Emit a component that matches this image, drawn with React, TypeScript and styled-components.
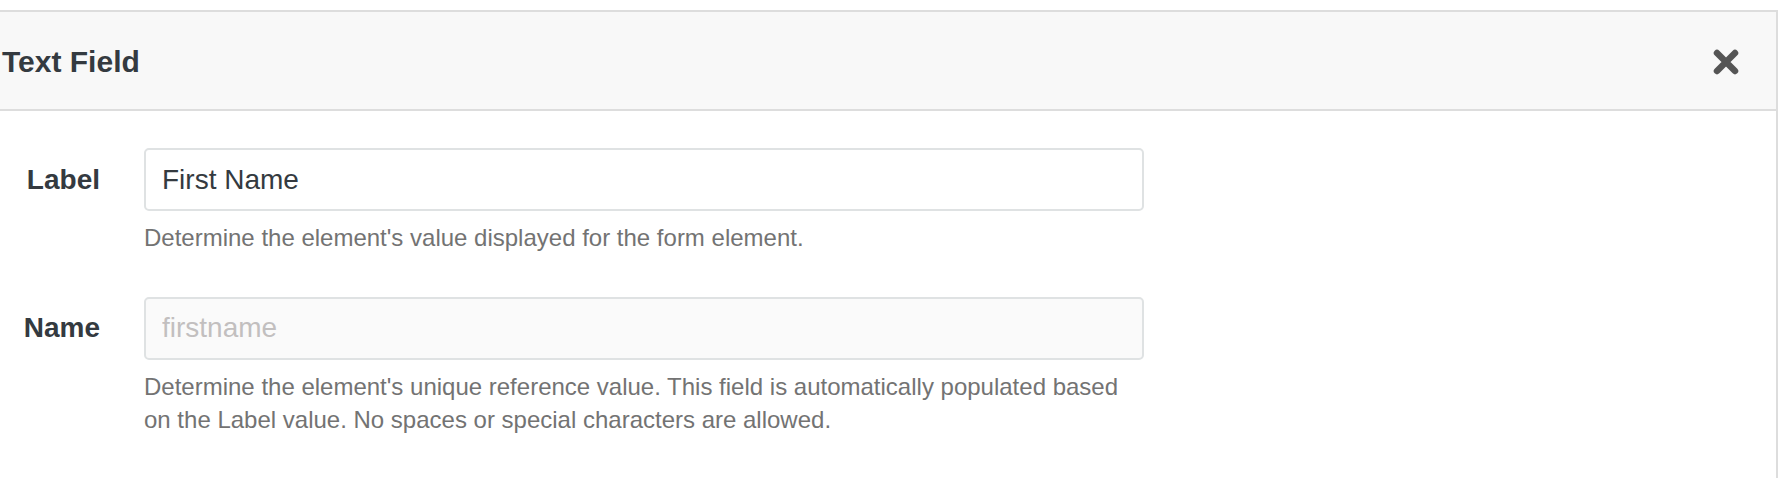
import React from "react";
import styled, { createGlobalStyle } from "styled-components";

const GlobalStyle = createGlobalStyle`
  *, *::before, *::after {
    box-sizing: border-box;
  }

  body {
    margin: 0;
    background-color: #ffffff;
    font-family: "Liberation Sans", Arial, Helvetica, sans-serif;
    color: #343a40;
  }
`;

interface FieldRowProps {
  label: string;
  value?: string;
  placeholder?: string;
  readOnly?: boolean;
  help: string;
}

const FieldRow: React.FC<FieldRowProps> = ({
  label,
  value,
  placeholder,
  readOnly,
  help
}) => {
  return (
    <StRow>
      <StLabel>{label}</StLabel>
      <StInput
        defaultValue={value}
        placeholder={placeholder}
        readOnly={readOnly}
        $muted={readOnly}
      />
      <StHelp>{help}</StHelp>
    </StRow>
  );
};

const App: React.FC = () => {
  return (
    <>
      <GlobalStyle />
      <StPanel>
        <StHeader>
          <StTitle>Text Field</StTitle>
          <StCloseButton aria-label="Close">
            <svg width="26" height="26" viewBox="0 0 26 26">
              <path
                d="M4 4 L22 22 M22 4 L4 22"
                stroke="#555555"
                strokeWidth="6.5"
                strokeLinecap="round"
              />
            </svg>
          </StCloseButton>
        </StHeader>

        <StBody>
          <FieldRow
            label="Label"
            value="First Name"
            help="Determine the element's value displayed for the form element."
          />
          <FieldRow
            label="Name"
            placeholder="firstname"
            readOnly
            help="Determine the element's unique reference value. This field is automatically populated based on the Label value. No spaces or special characters are allowed."
          />
        </StBody>
      </StPanel>
    </>
  );
};

export default App;

const StPanel = styled.section`
  margin: 10px 10px 0 -2px;
  border: 2px solid #dddddd;
  background-color: #ffffff;
`;

const StHeader = styled.header`
  display: flex;
  justify-content: space-between;
  align-items: center;
  height: 99px;
  padding: 3px 37px 0 2px;
  background-color: #f8f8f8;
  border-bottom: 2px solid #dddddd;
`;

const StTitle = styled.h2`
  margin: 0;
  font-size: 30px;
  font-weight: 700;
  color: #343a40;
`;

const StCloseButton = styled.button`
  display: flex;
  padding: 0;
  border: none;
  background: transparent;
  cursor: pointer;
`;

const StBody = styled.div`
  padding: 37px 0 80px 0;
`;

const StRow = styled.div`
  display: grid;
  grid-template-columns: 100px 1000px;
  column-gap: 44px;
  margin-bottom: 42px;
`;

const StLabel = styled.label`
  display: flex;
  justify-content: flex-end;
  align-items: center;
  height: 63px;
  font-size: 28px;
  font-weight: 700;
  color: #343a40;
`;

const StInput = styled.input<{ $muted?: boolean }>`
  width: 100%;
  height: 63px;
  padding: 0 16px;
  border: 2px solid #dfe2e3;
  border-radius: 5px;
  background-color: ${(p) => (p.$muted ? "#fafafa" : "#ffffff")};
  font-family: inherit;
  font-size: 28px;
  color: #343a40;
  outline: none;

  &::placeholder {
    color: #c2bfbf;
  }
`;

const StHelp = styled.p`
  grid-column: 2;
  margin: 10px 0 0 0;
  font-size: 24px;
  line-height: 33.6px;
  color: #737373;
`;
